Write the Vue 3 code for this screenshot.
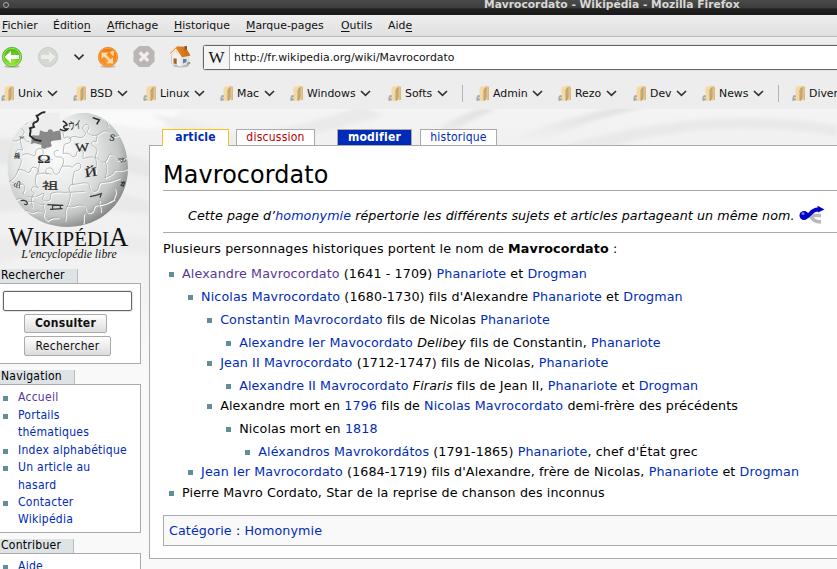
<script setup>
const menus = [
  ['', 'F', 'ichier', 51], ['Éditio', 'n', '', 54], ['', 'A', 'ffichage', 67],
  ['', 'H', 'istorique', 72], ['', 'M', 'arque-pages', 95], ['', 'O', 'utils', 47], ['Aid', 'e', '', 40],
]
const bookmarks = [
  { t: 'Unix', w: 72 }, { t: 'BSD', w: 70 }, { t: 'Linux', w: 77 }, { t: 'Mac', w: 70 },
  { t: 'Windows', w: 98 }, { t: 'Softs', w: 88, sep: true }, { t: 'Admin', w: 82 },
  { t: 'Rezo', w: 75 }, { t: 'Dev', w: 69 }, { t: 'News', w: 90, sep: true }, { t: 'Divers', w: 80 },
]
const nav = ['Accueil', 'Portails thématiques', 'Index alphabétique', 'Un article au hasard', 'Contacter Wikipédia']
</script>

<template>
  <div class="window">
    <header class="titlebar"><i class="dot"></i><span>Mavrocordato - Wikipédia - Mozilla Firefox</span></header>
    <nav class="menubar">
      <span v-for="m in menus" :key="m[1] + m[2]" :style="{ width: m[3] + 'px' }">{{ m[0] }}<u>{{ m[1] }}</u>{{ m[2] }}</span>
    </nav>
    <div class="toolbar">
      <svg class="tools" width="203" height="41" viewBox="0 37 203 41">
        <defs>
          <radialGradient id="gr" cx=".5" cy=".75" r=".7"><stop offset="0" stop-color="#9bea3c" /><stop offset="1" stop-color="#4bb90f" /></radialGradient>
          <radialGradient id="og" cx=".5" cy=".7" r=".7"><stop offset="0" stop-color="#ff9d2e" /><stop offset="1" stop-color="#ee7608" /></radialGradient>
          <linearGradient id="roof" x1="0" x2="1"><stop offset="0" stop-color="#e99a3c" /><stop offset="1" stop-color="#c9680c" /></linearGradient>
        </defs>
        <ellipse cx="12" cy="66.5" rx="8" ry="1.3" fill="#bbb" />
        <circle cx="12" cy="57" r="9.7" fill="url(#gr)" stroke="#55a82b" stroke-width=".7" />
        <circle cx="12" cy="57" r="8.6" fill="none" stroke="#b0ef79" stroke-width=".8" />
        <path d="M4.700 57 11 51v4h8v4h-8v4z" fill="#fff" />
        <circle cx="48" cy="57" r="9.5" fill="#d6d8d4" stroke="#c8cbc6" />
        <path d="M55.300 57 49 51v4h-8v4h8v4z" fill="#eceeea" />
        <path d="m74.500 54.700 4.500 4.300 4.500-4.300" fill="none" stroke="#333" stroke-width="1.700" />
        <ellipse cx="108" cy="66.5" rx="8" ry="1.3" fill="#c5c0ba" />
        <circle cx="108" cy="57" r="9.7" fill="url(#og)" stroke="#e48524" stroke-width=".7" />
        <circle cx="108" cy="57" r="8.7" fill="none" stroke="#ffae53" stroke-width=".7" />
        <path d="M101.500 52.500h7l-2.300 2.300 4.600 4.600 2.200-2.200.2 6.300-6.700-.2 2.200-2.200-4.700-4.600-2.500 2.800z M109.800 51.800l4.200-.8-.5 5.200-1.800-1.400z" fill="#ffdcae" />
        <path d="M139 46h10l5.500 5.500v10l-5.500 5.500h-10l-5.500-5.500v-10z" fill="#bbb5b5" />
        <path d="m139.800 52.500 8.400 8.400m0-8.400-8.400 8.400" stroke="#f0eded" stroke-width="3.400" />
        <ellipse cx="181" cy="66" rx="8" ry="1.500" fill="#bbb" />
        <path d="m171.500 55 3.800-4 6.500 5.500 6.400-2v8.200l-8 4.300-8.700-3.500z" fill="#f0f0ef" stroke="#a7abb0" stroke-width=".5" />
        <path d="m180.500 57 7.700-2.500v8.200l-7.700 4z" fill="#e3e5e8" />
        <path d="m170 55.500 5-5.500 6.500 7.500 9-2-5.200-8.700-8.200-.5-6.800 6.500z" fill="url(#roof)" />
        <path d="m169.800 55.800 6-6.300 5.700 8.200" fill="none" stroke="#fff1df" stroke-width="1.300" />
        <path d="M173.500 58.500h3.200v6l-3.200-1.200z" fill="#a96528" /><path d="M183 59h3.500v3l-3.500 1.500z" fill="#5f7d9c" />
        <path d="M184.500 46h2.500v4h-2.500z" fill="#9b5431" />
        <path d="M187 63c1-2 4-1.500 3.500.500l-4 2.500z" fill="#9aa58c" />
      </svg>
      <div class="address"><span class="wicon">W</span><span class="url">http://fr.wikipedia.org/wiki/Mavrocordato</span></div>
    </div>
    <div class="bookmarks">
      <div v-for="b in bookmarks" :key="b.t" class="bookmark" :class="{ sep: b.sep }" :style="{ width: b.w + 'px' }">
        <svg class="folder" width="14" height="17" viewBox="0 0 14 17">
          <defs><linearGradient id="fold" x1="0" x2="1"><stop offset="0" stop-color="#fbe3ae" /><stop offset=".65" stop-color="#f0d4a0" /><stop offset="1" stop-color="#d6b47c" /></linearGradient></defs>
          <path d="M4.500 1.500 10 .8l3 1V15l-9 1z" fill="url(#fold)" />
          <path d="M3.500 2 8 3v12.500L3.500 16z" fill="#f3d9a6" />
          <path d="M8 15.500V5l2-2.500V12l-1.500 3.500" fill="#dcbc84" stroke="#a58450" stroke-width=".7" />
          <path d="M.5 13c0-2.500 2.500-4 3.500-2v4l-2.500 1C.3 16 0 14.500.5 13z" fill="#a9a9a7" /><path d="M1.300 12.500 4 11.700v2.500z" fill="#d5d5d3" />
        </svg>
        <span>{{ b.t }}</span>
        <svg class="chev" width="11" height="7" viewBox="0 0 11 7"><path d="m1 1 4.500 4.300L10 1" fill="none" stroke="#333" stroke-width="1.700" /></svg>
      </div>
    </div>

    <div class="page">
      <svg class="swoosh" width="837" height="460" viewBox="0 0 837 460">
        <defs>
          <linearGradient id="pg" x1="0" y1="0" x2="0" y2="1"><stop offset="0" stop-color="#f4f4f4" /><stop offset=".12" stop-color="#efefef" /><stop offset=".36" stop-color="#f2f2f2" /><stop offset=".55" stop-color="#f9f9f9" /></linearGradient>
          <filter id="soft"><feGaussianBlur stdDeviation="2" /></filter>
          <linearGradient id="wave" x1="0" y1="0" x2="0" y2="1"><stop offset="0" stop-color="#dfdfdf" /><stop offset="1" stop-color="#f4f4f4" /></linearGradient>
        </defs>
        <rect width="837" height="460" fill="url(#pg)" />
        <g filter="url(#soft)">
          <path d="M100 12C145 20 160 30 180 0H60z" fill="#fafafa" />
          <path d="M-5 30Q80 25 155 55V70Q80 50-5 55z" fill="#e8e8e8" />
          <path d="M-5 78Q80 70 155 94V106Q70 95-5 103z" fill="#e9e9e9" />
          <path d="M-5 130Q70 115 155 130V146Q70 135-5 155z" fill="#ececec" />
          <path d="M250 38Q330 24 385 6L360-3Q290 22 240 26z" fill="#eaeaea" />
          <path d="M425 38Q438 12 480 0h18Q455 15 445 38z" fill="url(#wave)" />
          <path d="M500 36Q550 12 620-2h30Q590 8 535 38z" fill="url(#wave)" />
          <path d="M560 38Q700-5 837 16V27Q710 8 610 38z" fill="#e9e9e9" />
          <path d="M150 5Q205 12 260 35H190Q170 15 150 5z" fill="#ededed" />
        </g>
      </svg>
      <aside class="side">
        <svg class="logo" width="150" height="160" viewBox="0 12 450 480">
          <defs>
            <radialGradient id="ball" cx=".38" cy=".36" r=".68"><stop offset="0" stop-color="#fdfdfd" /><stop offset=".5" stop-color="#e6e8e7" /><stop offset=".8" stop-color="#c3c6c5" /><stop offset="1" stop-color="#858887" /></radialGradient>
            <clipPath id="round"><path d="M108 40C45 65 22 120 23 190c2 105 78 176 180 176s181-76 181-176c0-70-35-132-91-158l-30-9-30 2-25 8-18 10-5 40-55 12-45 24z" /></clipPath>
            <path id="seams" d="M85 45c0 18-15 15-18 4-12 3-20 18-8 20 20 8 14 17 7 24M34 105q15 10 31-7c10-3 9 10 18 12 15 2 13-18 32-8M63 96c-5 20 5 28 4 40-17-9-28 11-12 20 17 6 6 26-1 40M66 151c15-9 24-3 31 1 18 4 2-17 19-21s18 19 5 26c4 12 26 8 38 7M119 160c2 20-7 34-2 44M54 194c12 0 21 2 28 8 15 5 5-19 23-15 15 3 8 17 4 22 16-6 32-6 46-1M55 195c-7 17-12 28-29 35M29 230c15 2 16 16 29 11 19-14 21 18 11 21 2 15 19 13 28 15M109 209c-6 25-2 34 7 40-19-12-30 6-13 17-14 12-6 31-5 43M98 276c18 0 20-10 34-10 5 5-15 19 5 22 22 2 11-17 17-23 20-8 35 0 56-4M49 284c20-10 25 10 42 6s18 12 41 8M131 298c-5 13 8 13 1 27-8 12 6 19 12 24M71 318c10-5 17 6 31 5 14-10 26-2 30 3M176 137c-17-5-18 18-4 19 21-3 22 11 15 28 8 0 22-3 30 3 16-17 27-15 25-2-1 18-23 7-20 21-4 14-6 27-3 35M187 184c-9 8-5 20-16 24-17 0-6-17-19-19-17-2-18 13-10 20M188 75l4 25c17-10 25 0 19 10-5 10-18 2-19 12l-3 24c11-3 23-1 28 9 22 2 3-17 24-19 17 0 4 18 9 25 15-5 28-7 31-3M206 103c14-20 34 4 47-10s-13-16-2-30 23 5 12 13c-6 12 15 18 29 14M292 91l-4 20c-14-7-19 10-4 15 14 7 3 21 1 33M292 90c15-7 15-15 31-11 14 7 5 15 14 19l21-7M301 37c14 3 24 17 24 29M284 157c16 2 17 20 30 14s9-29 22-22 8 21 20 17l24-8M284 158c12 15 0 36 3 50M316 171c10 19 2 39-1 48M217 238c20 0 29-6 40-4 20-2 3 22 24 25s9-22 23-26l27-3 29-10M211 262c2 18-6 32-9 44M217 238c-14 4-10 18-6 24M210 262q20-2 44-2M201 304c-7 12-2 33-6 44M201 304c20 8 34-10 48-2 16 10 0 18 20 22 20-2 4-22 24-24q24 0 50-18M144 347c10-11 19-8 32-8M253 325c-6 12 2 22-4 31M300 287c-10 12 7 21 2 34M343 251c13 9-4 27-3 36M315 219c15-10 27-8 28-22 14-2 22 4 39-5" />
          </defs>
          <path d="M108 40C45 65 22 120 23 190c2 105 78 176 180 176s181-76 181-176c0-70-35-132-91-158l-30-9-30 2-25 8-18 10-5 40-55 12-45 24z" fill="url(#ball)" />
          <path d="M92 87l42-62 44-2 5 60-30 20-40 12z" fill="#ededed" />
          <path d="M96 92c4-4 16 2 22-2l2-14 14 5 10-1c-4-8 14-12 15 0l22-4 3 28-26 3c-8 2-6 8-2 14-6 10-16 4-19 10-6 2-18-2-12-11l-22-6-10 4z" fill="#898989" />
          <g clip-path="url(#round)" fill="none">
            <use href="#seams" stroke="#fff" stroke-width="3.500" transform="translate(2 2)" />
            <use href="#seams" stroke="#949796" stroke-width="1.900" />
          </g>
          <path d="M136 22c-14-3-14 8-26 10 4 10 8 12 0 18-12 2-12 8-8 16l-12 4c6 10-2 14 0 22l14 12 20 4" fill="none" stroke="#292929" stroke-width="6" />
          <path d="M180 72c6 6 18 7 23 0-10 2-17-7-7-11 12 2 0-10-8-13M278 38l20 7-8 13" fill="none" stroke="#282828" stroke-width="4.500" />
          <g class="glyphs">
            <text x="112" y="175" font-size="37" textLength="40" lengthAdjust="spacingAndGlyphs">Ω</text>
            <text x="226" y="140" font-size="36" textLength="42" lengthAdjust="spacingAndGlyphs" transform="rotate(-3 226 140)">W</text>
            <text x="256" y="217" font-size="38" textLength="37" lengthAdjust="spacingAndGlyphs" transform="rotate(-8 256 217)">Й</text>
            <text class="cjk" x="126" y="251" font-size="29" textLength="49" lengthAdjust="spacingAndGlyphs">祖</text>
            <text x="207" y="75" font-size="32" textLength="38" lengthAdjust="spacingAndGlyphs" transform="rotate(-8 207 75)">ウイ</text>
            <text x="327" y="105" font-size="29" transform="rotate(14 327 105)">S</text>
            <text x="42" y="143" font-size="24" transform="rotate(83 42 143)">वा</text>
            <text x="360" y="160" font-size="19" opacity=".75" transform="rotate(75 360 160)">நி</text>
            <text x="58" y="103" font-size="21" opacity=".6">w</text>
            <text x="38" y="245" font-size="23" opacity=".8" transform="rotate(12 38 245)">વી</text>
          </g>
          <path d="M270 275q18-3 34-9l-4 12M142 299l48 2m-40 12 38-2m-29-11q-3 8-1 12m23-12v12M62 287q17-3 20 7 0 8-10 3M363 232l11 0-4 12-7-3 10-12" fill="none" stroke="#3a3a3a" stroke-width="3.500" />
          <g class="word">
            <text x="25" y="423" font-size="85" textLength="76" lengthAdjust="spacingAndGlyphs">W</text>
            <text x="101" y="423" font-size="64" textLength="226" lengthAdjust="spacingAndGlyphs">IKIPÉDI</text>
            <text x="327" y="423" font-size="85" textLength="58" lengthAdjust="spacingAndGlyphs">A</text>
            <text class="motto" x="64" y="458" font-size="38" textLength="286" lengthAdjust="spacingAndGlyphs">L'encyclopédie libre</text>
          </g>
        </svg>
        <section class="portlet search">
          <h5>Rechercher</h5>
          <div class="box"><input aria-label="Rechercher" /><button class="go">Consulter</button><button class="find">Rechercher</button></div>
        </section>
        <section class="portlet navigation">
          <h5>Navigation</h5>
          <div class="box"><ul><li v-for="(n, i) in nav" :key="n"><a :class="{ seen: i === 0 }">{{ n }}</a></li></ul></div>
        </section>
        <section class="portlet contribute">
          <h5>Contribuer</h5>
          <div class="box"><ul><li><a>Aide</a></li></ul></div>
        </section>
      </aside>

      <main>
        <div class="tabs"><a class="tab current">article</a><a class="tab talk">discussion</a><a class="tab edit">modifier</a><a class="tab history">historique</a></div>
        <article>
          <h1><span>Mavrocordato</span></h1>
          <div class="notice">
            <span>Cette page d’<a>homonymie</a> répertorie les différents sujets et articles partageant un même nom.</span>
            <svg width="26" height="20" viewBox="0 0 26 20">
              <path d="M9 11.500q4 0 6-1h7M11 10q3 7 11 7" fill="none" stroke="#b9b9b9" stroke-width="3.400" />
              <path d="M5 12C12 12 11 4.500 19 4.500" fill="none" stroke="#0000c8" stroke-width="4" />
              <path d="m18.500.8 7 3.600-6.500 3z" fill="#0000c8" /><circle cx="5" cy="10.500" r="4.500" fill="#0000c2" /><circle cx="4" cy="8.500" r="1.600" fill="#7777ee" />
            </svg>
          </div>
          <p>Plusieurs personnages historiques portent le nom de <b>Mavrocordato</b> :</p>
          <ul class="tree">
            <li><a class="seen">Alexandre Mavrocordato</a> (1641 - 1709) <a>Phanariote</a> et <a>Drogman</a>
              <ul>
                <li><a>Nicolas Mavrocordato</a> (1680-1730) fils d'Alexandre <a>Phanariote</a> et <a>Drogman</a>
                  <ul>
                    <li><a>Constantin Mavrocordato</a> fils de Nicolas <a>Phanariote</a>
                      <ul><li><a>Alexandre Ier Mavocordato</a> <i>Delibey</i> fils de Constantin, <a>Phanariote</a></li></ul>
                    </li>
                    <li><a>Jean II Mavrocordato</a> (1712-1747) fils de Nicolas, <a>Phanariote</a>
                      <ul><li><a>Alexandre II Mavrocordato</a> <i>Firaris</i> fils de Jean II, <a>Phanariote</a> et <a>Drogman</a></li></ul>
                    </li>
                    <li>Alexandre mort en <a>1796</a> fils de <a>Nicolas Mavrocordato</a> demi-frère des précédents
                      <ul><li>Nicolas mort en <a>1818</a>
                        <ul><li><a>Aléxandros Mavrokordátos</a> (1791-1865) <a>Phanariote</a>, chef d'État grec</li></ul>
                      </li></ul>
                    </li>
                  </ul>
                </li>
                <li><a>Jean Ier Mavrocordato</a> (1684-1719) fils d'Alexandre, frère de Nicolas, <a>Phanariote</a> et <a>Drogman</a></li>
              </ul>
            </li>
            <li>Pierre Mavro Cordato, Star de la reprise de chanson des inconnus</li>
          </ul>
          <div class="cats"><a>Catégorie</a> : <a>Homonymie</a></div>
        </article>
      </main>
    </div>
  </div>
</template>

<style>
html, body { margin: 0; overflow: hidden; }
</style>
<style scoped>
* { box-sizing: border-box; }
.window { width: 837px; height: 569px; overflow: hidden; background: #ededed; color: #000; font-family: "DejaVu Sans", sans-serif; font-size: 12.7px; display: flex; flex-direction: column; }
.titlebar { height: 15px; flex: none; background: linear-gradient(#4a4a4a, #3e3e3e 50%, #222 60%, #191919); color: #d8d8d4; font-size: 10.7px; font-weight: bold; line-height: 9px; display: flex; align-items: flex-start; padding: 0 0 0 3px; }
.titlebar span { margin-left: 475px; white-space: nowrap; }
.dot { width: 6px; height: 6px; border: 1px solid #aaa; border-radius: 50%; margin-top: 2px; }
.menubar { height: 22px; flex: none; display: flex; padding-left: 2px; background: linear-gradient(#eee, #e0e0e0); border-bottom: 1px solid #bbb; font-size: 10.9px; line-height: 22px; color: #111; }
.menubar span { white-space: nowrap; }
.menubar u { text-underline-offset: 2px; }
.toolbar { height: 41px; flex: none; display: flex; }
.tools { flex: none; display: block; }
.address { flex: 1; height: 25px; margin-top: 8px; border: 1px solid #666; border-right: 0; border-radius: 3px 0 0 3px; background: #fff; display: flex; align-items: center; font-size: 10.9px; color: #111; box-shadow: 0 0 0 1px #e0e0e0; }
.wicon { width: 26px; height: 23px; background: #f4f4f4; border-right: 1px solid #aaa; font: 17px/23px "Liberation Serif", serif; text-align: center; }
.url { margin-left: 4px; }
.bookmarks { height: 31px; flex: none; display: flex; padding-left: 1px; font-size: 10.9px; color: #111; }
.bookmark { flex: none; display: flex; align-items: center; height: 30px; white-space: nowrap; }
.folder { margin-right: 3px; flex: none; }
.chev { margin-left: 4.6px; flex: none; }
.sep::after { content: ""; width: 1px; height: 17px; background: #b5b5b5; margin: 0 13px 0 auto; }
.page { flex: 1; min-height: 0; display: flex; position: relative; background: #f9f9f9; }
.swoosh { position: absolute; left: 0; top: 0; }
.side { width: 149px; flex: none; position: relative; font-family: "DejaVu Sans Condensed", "DejaVu Sans", sans-serif; font-stretch: condensed; font-size: 12.06px; letter-spacing: .25px; }
.logo { display: block; width: 150px; letter-spacing: 0; }
.glyphs { font-family: "Liberation Serif", "DejaVu Sans", "Noto Sans CJK JP", serif; fill: #262626; stroke: #262626; stroke-width: .5; }
.cjk { font-family: "Noto Sans CJK JP", sans-serif; }
.word { font-family: "Liberation Serif", serif; fill: #111; }
.motto { font-style: italic; }
.portlet { width: 141px; margin-bottom: 6px; }
h5 { margin: 0; height: 14px; width: 78px; padding-left: 1px; background: #dee3e6; border-right: 1px solid #b8bcbf; font-size: 12.06px; line-height: 13px; font-weight: normal; }
.box { border: 1px solid #aaa; border-left: 0; background: #fff; }
.search .box { height: 81px; display: flex; flex-direction: column; align-items: flex-start; padding: 7px 3px; }
input { width: 129px; height: 20px; border: 1px solid #666; border-radius: 2px; padding: 0; background: #fff; box-shadow: 0 0 0 1px #e5e5e5; }
button { height: 20px; padding: 0; margin: 3px 0 0 21px; border: 1px solid #aaa; border-radius: 2px; background: linear-gradient(#fff, #dcdcdc); font: inherit; letter-spacing: inherit; color: #111; line-height: 17px; }
.go { width: 83px; font-weight: bold; } .find { width: 87px; }
.navigation h5 { width: 75px; } .contribute h5 { width: 74px; }
.side ul { list-style: none; margin: 0; padding: 4px 11px 0 18px; line-height: 17.2px; }
.navigation .box { height: 149px; } .contribute .box { height: 40px; }
.side li { margin-bottom: .5px; position: relative; }
.side li::before { content: ""; position: absolute; left: -15px; top: 7px; width: 5px; height: 5px; background: #638c9c; }
a { color: #002bb8; text-decoration: none; } a.seen { color: #5a3696; }
main { flex: none; width: 700px; position: relative; }
.tabs { height: 36px; padding: 20px 0 0 13px; display: flex; font: 12.06px/15px "DejaVu Sans Condensed", "DejaVu Sans", sans-serif; font-stretch: condensed; letter-spacing: .22px; }
.tab { height: 16px; border: 1px solid #aaa; border-bottom: 0; background: #fff; text-align: center; flex: none; }
.current { width: 67px; height: 17px; border-color: #fabd23; font-weight: bold; position: relative; z-index: 1; }
.talk { width: 79px; margin-left: 7px; color: #ba0000; }
.edit { width: 75px; margin-left: 22px; background: #002bb8; color: #fff; font-weight: bold; }
.history { width: 77px; margin-left: 8px; }
article { height: 414px; border: 1px solid #aaa; background: #fff; padding: 13px 0 0 13px; letter-spacing: .11px; }
h1 { margin: 0; height: 32px; border-bottom: 1px solid #aaa; font-size: 23.9px; line-height: 32px; font-weight: normal; }
.notice { height: 42px; border-bottom: 1px solid #aaa; padding: 8px 0 0 25px; display: flex; align-items: center; font-style: italic; white-space: nowrap; letter-spacing: .073px; }
.notice svg { margin-left: 4px; flex: none; position: relative; top: -1px; }
p { margin: 6px 0 0; line-height: 19.05px; }
.tree { font-size: 12.7px; line-height: 19.05px; margin-top: 6px; }
.tree, .tree ul { list-style: none; padding: 0; margin-bottom: 0; margin-left: 19.05px; white-space: nowrap; }
.tree ul { margin-top: 3.8px; }
.tree li { margin-bottom: 1.27px; position: relative; }
.tree > li:last-child { margin-top: 2px; }
.tree li::before { content: ""; position: absolute; left: -13px; top: 8px; width: 5px; height: 5px; background: #638c9c; }
.cats { height: 31px; margin-top: 13px; border: 1px solid #aaa; background: #f9f9f9; padding: 0 5px; line-height: 29px; }
</style>
